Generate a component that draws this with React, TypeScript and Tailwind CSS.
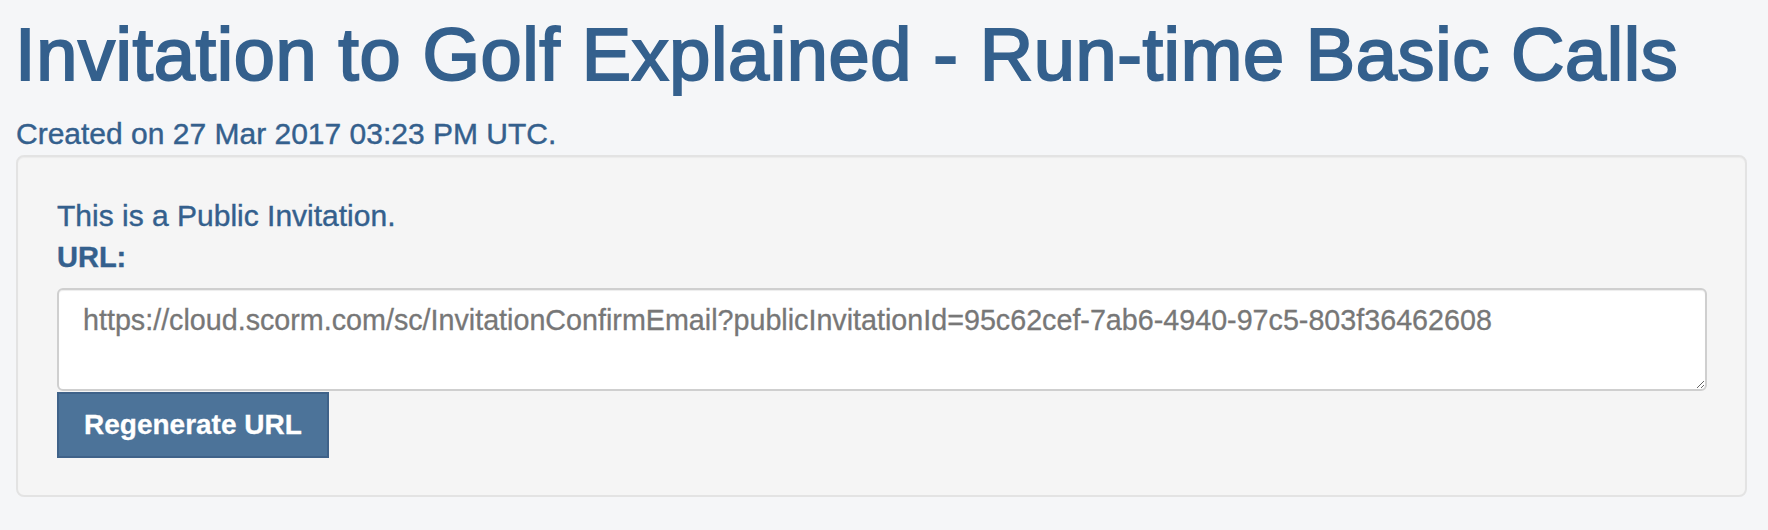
export default function App() {
  return (
    <div className="min-h-[530px] w-full bg-[#f5f6f8] px-4 pt-[18px] font-['Liberation_Sans',Arial,sans-serif]">
      <h1 className="-ml-[1px] text-[74px] leading-[74px] font-normal tracking-[0.6px] text-[#34608d] [-webkit-text-stroke:2px_#34608d]">
        Invitation to Golf Explained - Run-time Basic Calls
      </h1>
      <p className="mt-[27px] text-[30px] leading-[30px] text-[#34608d] [-webkit-text-stroke:0.4px_#34608d]">
        Created on 27 Mar 2017 03:23 PM UTC.
      </p>
      <div className="mt-[6px] w-[1731px] h-[342px] rounded-[8px] border-2 border-[#e3e3e3] bg-[#f5f5f5] pl-[39px] pt-[44px] shadow-[inset_0_1px_1px_rgba(0,0,0,0.04)]">
        <p className="text-[30px] leading-[30px] text-[#34608d] [-webkit-text-stroke:0.4px_#34608d]">This is a Public Invitation.</p>
        <p className="mt-[12px] text-[29px] leading-[29px] font-bold text-[#34608d] [-webkit-text-stroke:0.4px_#34608d]">URL:</p>
        <textarea
          readOnly
          className="mt-[16px] block w-[1650px] h-[103px] rounded-[6px] border-2 border-[#cfcfcf] bg-white pl-[24px] pt-[13px] text-[28.7px] leading-[34px] text-[#777777] outline-none resize-y font-['Liberation_Sans',Arial,sans-serif] [-webkit-text-stroke:0.3px_#777777] shadow-[inset_0_1px_1px_rgba(0,0,0,0.075)]"
          defaultValue="https://cloud.scorm.com/sc/InvitationConfirmEmail?publicInvitationId=95c62cef-7ab6-4940-97c5-803f36462608"
        />
        <button className="mt-[1px] block w-[272px] h-[66px] border-2 border-[#3f6289] bg-[#4c7399] text-left pl-[25px] text-[28px] leading-[28px] font-bold text-white [-webkit-text-stroke:0.3px_#ffffff]">
          Regenerate URL
        </button>
      </div>
    </div>
  );
}
